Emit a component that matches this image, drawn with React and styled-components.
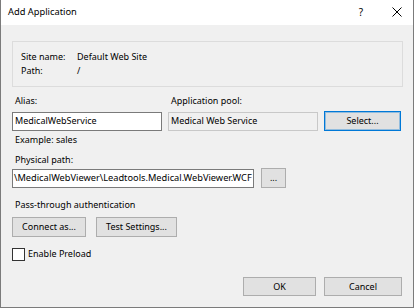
import React from "react";
import styled, { createGlobalStyle } from "styled-components";

const Global = createGlobalStyle`
  html, body { margin: 0; padding: 0; background: #ffffff; }
  body { font-family: "Noto Sans", "Open Sans", sans-serif; font-size: 9px; color: #000; }
  * { box-sizing: border-box; }
`;

const Window = styled.div`
  width: 414px;
  height: 308px;
  border: 1px solid #7b7b7b;
  border-top: none;
  display: flex;
  flex-direction: column;
  background: #f0f0f0;
`;

const TitleBar = styled.div`
  height: 25px;
  background: #ffffff;
  display: flex;
  align-items: flex-start;
  padding: 5px 0 0 7px;
`;

const Title = styled.div`
  flex: 1;
  font-size: 9.3px;
  line-height: 14px;
`;

const HelpGlyph = styled.div`
  width: 20px;
  line-height: 14px;
  font-size: 10px;
  text-align: center;
  margin-right: 16px;
`;

const CloseBox = styled.div`
  width: 20px;
  height: 14px;
  display: flex;
  align-items: center;
  justify-content: center;
  margin-right: 6px;
`;

const Body = styled.div`
  flex: 1;
  padding: 16px 10px 0 11px;
  display: flex;
  flex-direction: column;
`;

const GroupBox = styled.div`
  border: 1px solid #dcdcdc;
  padding: 8px 8px 8px 8px;
  display: grid;
  grid-template-columns: 56px auto;
  line-height: 14px;
`;

const FieldGrid = styled.div`
  margin-top: 7px;
  display: grid;
  grid-template-columns: 150px 150px 77px;
  column-gap: 6px;
  row-gap: 3px;
  align-items: end;
`;

const Label = styled.div`
  line-height: 14px;
  padding-left: ${(p) => p.$indent ?? 3}px;
  margin-top: ${(p) => p.$top ?? 0}px;
  white-space: nowrap;
`;

const TextBox = styled.div`
  height: 19px;
  border: 1px solid ${(p) => (p.$readOnly ? "#c8c8c8" : "#7a7a7a")};
  background: ${(p) => (p.$readOnly ? "#f0f0f0" : "#ffffff")};
  line-height: 15px;
  padding: 0 ${(p) => p.$pad ?? 2}px;
  font-size: ${(p) => p.$size ?? 9}px;
  white-space: nowrap;
  overflow: hidden;
  width: ${(p) => (p.$width ? `${p.$width}px` : "auto")};
`;

const Button = styled.div`
  height: ${(p) => p.$h ?? 20}px;
  width: ${(p) => p.$w}px;
  background: #e1e1e1;
  border: 1px solid ${(p) => (p.$focused ? "#0078d7" : "#adadad")};
  box-shadow: ${(p) => (p.$focused ? "inset 0 0 0 1px rgba(0,120,215,0.35)" : "none")};
  display: flex;
  align-items: center;
  justify-content: center;
  line-height: 14px;
  flex: none;
`;

const PathRow = styled.div`
  margin-top: 1px;
  display: flex;
  align-items: flex-end;
  gap: 7px;
`;

const ButtonRow = styled.div`
  margin-top: ${(p) => p.$top}px;
  display: flex;
  gap: ${(p) => p.$gap}px;
  justify-content: ${(p) => (p.$end ? "flex-end" : "flex-start")};
  padding-right: ${(p) => (p.$end ? 1 : 0)}px;
`;

const CheckRow = styled.div`
  margin-top: 10px;
  display: flex;
  align-items: center;
  gap: 3px;
  line-height: 14px;
  height: 14px;
`;

const CheckBox = styled.div`
  width: 13px;
  height: 13px;
  border: 1px solid #333333;
  background: #ffffff;
`;

export default function App() {
  return (
    <>
      <Global />
      <Window>
        <TitleBar>
          <Title>Add Application</Title>
          <HelpGlyph>?</HelpGlyph>
          <CloseBox>
            <svg width="10" height="10" viewBox="0 0 10 10">
              <path d="M0.5 0.5 L9.5 9.5 M9.5 0.5 L0.5 9.5" stroke="#000" strokeWidth="1" fill="none" />
            </svg>
          </CloseBox>
        </TitleBar>
        <Body>
          <GroupBox>
            <div>Site name:</div>
            <div>Default Web Site</div>
            <div>Path:</div>
            <div>/</div>
          </GroupBox>
          <FieldGrid>
            <Label>Alias:</Label>
            <Label>Application pool:</Label>
            <div />
            <TextBox>MedicalWebService</TextBox>
            <TextBox $readOnly>Medical Web Service</TextBox>
            <Button $focused $w={77}>Select...</Button>
          </FieldGrid>
          <Label $top={2}>Example: sales</Label>
          <Label $top={6}>Physical path:</Label>
          <PathRow>
            <TextBox $width={242} $pad={1} $size={9.25}>\MedicalWebViewer\Leadtools.Medical.WebViewer.WCF</TextBox>
            <Button $w={25}>...</Button>
          </PathRow>
          <Label $top={10}>Pass-through authentication</Label>
          <ButtonRow $top={5} $gap={10}>
            <Button $w={74}>Connect as...</Button>
            <Button $w={81}>Test Settings...</Button>
          </ButtonRow>
          <CheckRow>
            <CheckBox />
            <span>Enable Preload</span>
          </CheckRow>
          <ButtonRow $top={16} $gap={8} $end>
            <Button $w={73} $h={19}>OK</Button>
            <Button $w={78} $h={19}>Cancel</Button>
          </ButtonRow>
        </Body>
      </Window>
    </>
  );
}
